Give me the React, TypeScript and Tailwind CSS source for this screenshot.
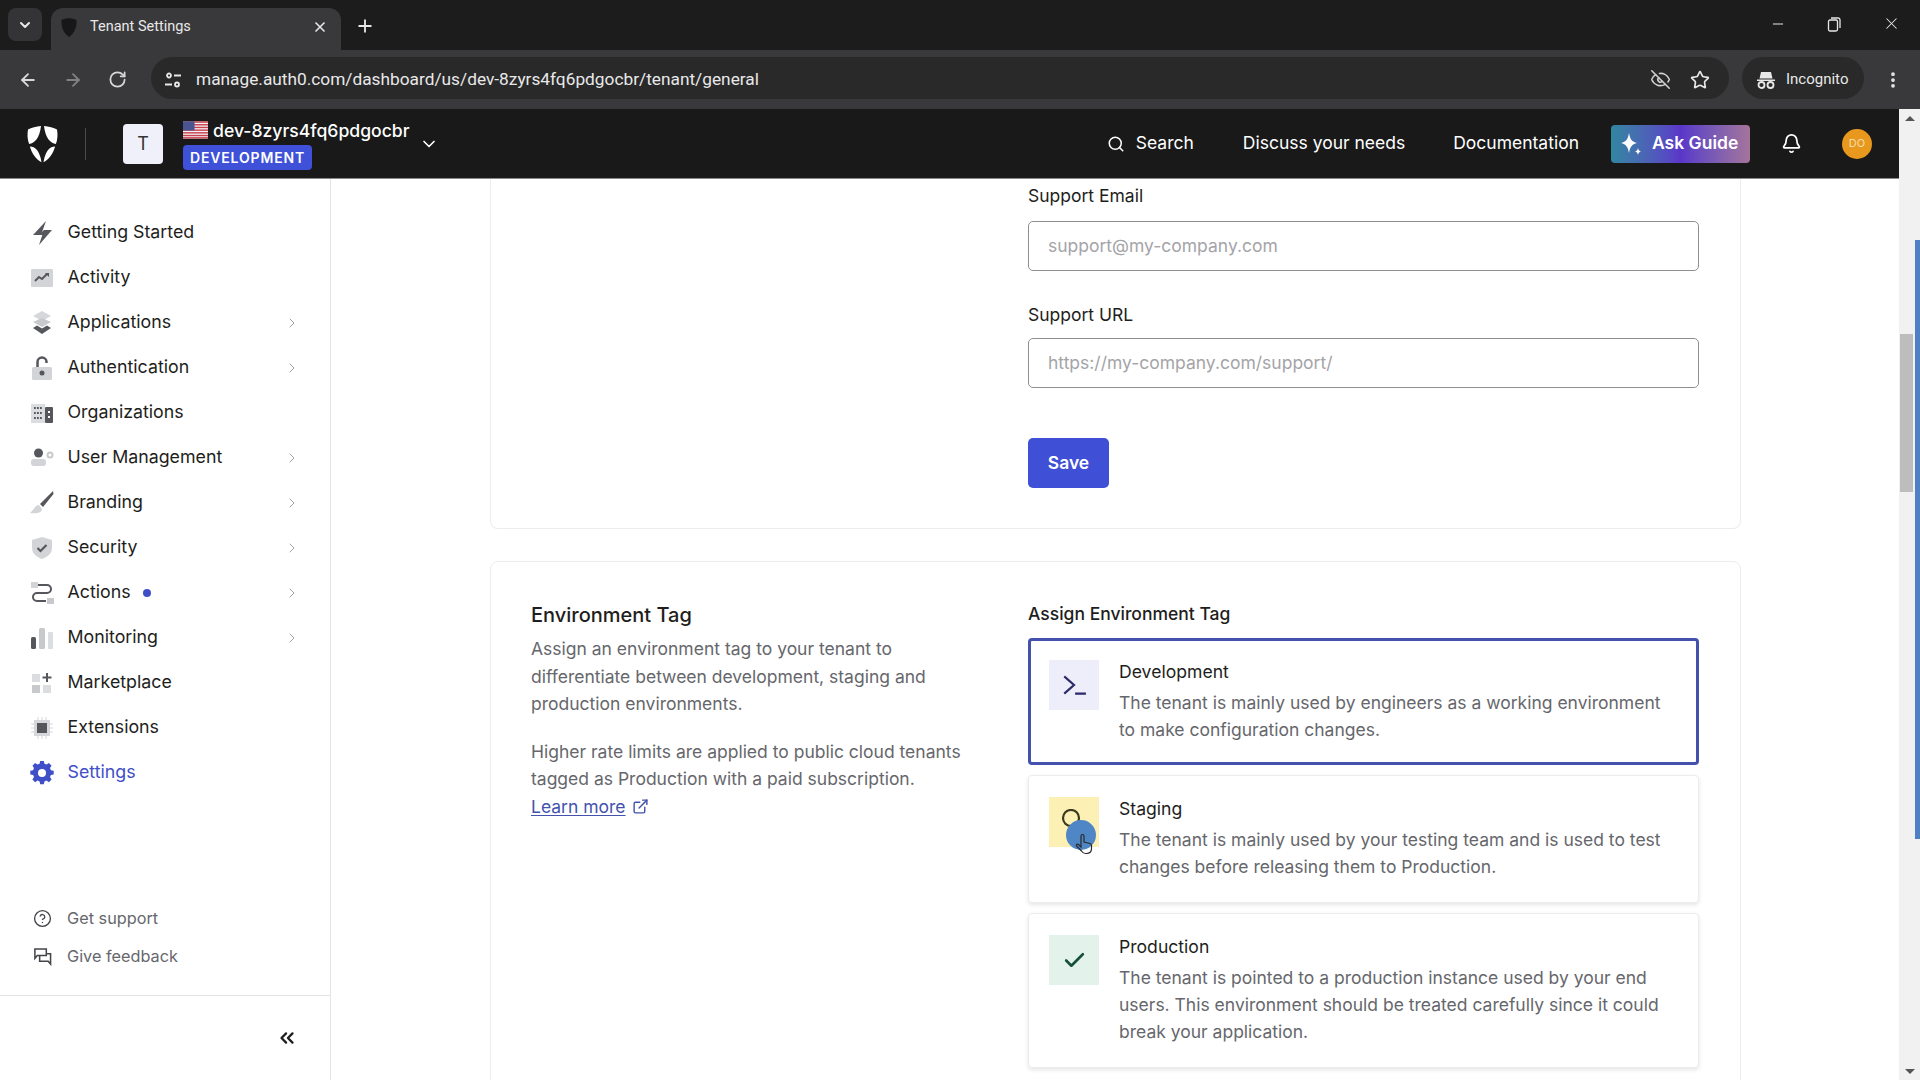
import React from 'react';
import {
  ArrowLeft,
  ArrowRight,
  Bell,
  Check,
  ChevronDown,
  ChevronRight,
  ChevronsLeft,
  CircleHelp,
  EllipsisVertical,
  ExternalLink,
  EyeOff,
  Minus,
  Plus,
  RotateCw,
  Search,
  Star,
  X,
} from 'lucide-react';

const DARK = '#56575c';
const LIGHT = '#c8c9cd';

// Logo: four petals around a star
const Logo = () => (
  <svg viewBox="0 0 32 38" className="h-[38px] w-[31px]" fill="#fff">
    <path d="M14.500 0.500C9.500 1 4.500 2.200 1 4c-.9 5.500-.5 10.500 1.200 15C8 18.500 13 12.500 14.500.5z" />
    <path d="M17.500 0.500C22.500 1 27.500 2.200 31 4c.9 5.500.5 10.500-1.200 15C24 18.500 19 12.500 17.500.5z" />
    <path d="M3 21.500C8.500 21.500 13 26 15 37.800 9 34.500 5 28.500 3 21.500z" />
    <path d="M29 21.500C23.500 21.500 19 26 17 37.800 23 34.500 27 28.500 29 21.500z" />
  </svg>
);

const Flag = () => (
  <svg viewBox="0 0 26 18" className="h-[18px] w-[25px]">
    <rect width="26" height="18" fill="#f3f3f5" />
    {[0, 2.8, 5.6, 8.4, 11.2, 14, 16.400].map((y) => (
      <rect key={y} y={y} width="26" height="1.500" fill="#c8414f" />
    ))}
    <rect width="12" height="9.500" fill="#4a5490" />
  </svg>
);

const navIcons: Record<string, React.ReactNode> = {
  bolt: (
    <>
      <path d="M16 0 3 14h8z" fill={DARK} />
      <path d="M9 24 22 9h-8z" fill={DARK} />
      <path d="M9 14h6l-1-5z" fill={DARK} />
    </>
  ),
  activity: (
    <>
      <rect x="1" y="3" width="22" height="18" rx="1" fill="#d3d4d7" />
      <path d="m5 15 4-4 3 2 5-5" fill="none" stroke={DARK} strokeWidth="2" />
      <path d="M15 7h4v4z" fill={DARK} />
    </>
  ),
  layers: (
    <>
      <path d="M12 0 21 5l-9 5-9-5z" fill="#d6d7da" />
      <path d="M3 11l9-4 9 4-9 5z" fill={LIGHT} />
      <path d="M3 17l4-2.500 5 3 5-3 4 2.500-9 6z" fill={DARK} />
    </>
  ),
  lock: (
    <>
      <path d="M7.500 11V6a4.500 4.500 0 0 1 9 0v1" fill="none" stroke={DARK} strokeWidth="2.500" />
      <rect x="2" y="11" width="20" height="13" rx="1.500" fill="#d3d4d7" />
      <circle cx="12" cy="17" r="2.500" fill={DARK} />
    </>
  ),
  org: (
    <>
      <rect x="1" y="3" width="14" height="19" fill="#dcdde0" />
      <rect x="15" y="6" width="8" height="16" rx="1" fill={DARK} />
      {[6, 11, 16].map((y) =>
        [4, 7, 10].map((x) => <rect key={`${x}-${y}`} x={x} y={y} width="1.800" height="2" fill={DARK} />),
      )}
      <rect x="18" y="10" width="2" height="2" fill="#fff" />
      <rect x="18" y="15" width="2" height="2" fill="#fff" />
    </>
  ),
  user: (
    <>
      <circle cx="8.500" cy="7" r="4.500" fill={DARK} />
      <rect x="1" y="13" width="15" height="7" rx="3" fill="#d3d4d7" />
      <circle cx="20" cy="9" r="2.500" fill="none" stroke={LIGHT} strokeWidth="2" />
    </>
  ),
  brush: (
    <>
      <path d="M23 0 10 13l3 3L23.500 3z" fill={DARK} />
      <path d="M9 14c-4 0-5 5-9 8 6 1 12 0 12-4z" fill="#d3d4d7" />
    </>
  ),
  shield: (
    <>
      <path d="M12 1 22 4v8c0 6-5 9-10 11C7 21 2 18 2 12V4z" fill="#d3d4d7" />
      <path d="m7.500 12 3 3 6-6" fill="none" stroke={DARK} strokeWidth="2.200" />
    </>
  ),
  actions: (
    <>
      <rect x="1" y="1" width="7" height="6" fill="#d3d4d7" />
      <rect x="17" y="17" width="7" height="6" fill={LIGHT} />
      <path d="M8 4h9a4 4 0 0 1 0 8H7a4 4 0 0 0 0 8h9" fill="none" stroke={DARK} strokeWidth="2" />
    </>
  ),
  bars: (
    <>
      <rect x="1" y="11" width="5" height="12" rx="1.500" fill={DARK} />
      <rect x="9" y="2" width="6" height="21" rx="1.500" fill={LIGHT} />
      <rect x="18" y="6" width="5" height="17" rx="1" fill="#dcdde0" />
    </>
  ),
  market: (
    <>
      <rect x="2" y="3" width="8" height="8" fill="#dcdde0" />
      <rect x="2" y="14" width="8" height="8" fill={LIGHT} />
      <rect x="13" y="14" width="8" height="8" fill="#dcdde0" />
      <path d="M17 2v9M12.500 6.500h9" stroke={DARK} strokeWidth="2" />
    </>
  ),
  chip: (
    <>
      <rect x="4" y="4" width="16" height="16" fill="#d6d7da" />
      <path d="M8 1v22M12 1v22M16 1v22M1 8h22M1 12h22M1 16h22" stroke="#d6d7da" strokeWidth="1" />
      <rect x="7" y="7" width="10" height="10" fill={DARK} />
    </>
  ),
  gear: (
    <>
      <path
        d="M10 1h4l.7 3.100 2.300 1 2.700-1.700 2.900 2.900L20.900 9l1 2.300 3.100.7v4l-3.100.7-1 2.300 1.700 2.700-2.900 2.900-2.700-1.700-2.300 1-.7 3.100h-4l-.7-3.100-2.300-1-2.700 1.700-2.900-2.900L3.100 19l-1-2.300-3.100-.7v-4l3.100-.7 1-2.300L1.400 6.300l2.900-2.900L7 5.100l2.300-1z"
        transform="translate(1.200 -1) scale(.9)"
        fill="#3f4fc8"
      />
      <circle cx="12" cy="12" r="4" fill="#fff" />
    </>
  ),
};

const navItems = [
  { label: 'Getting Started', icon: 'bolt' },
  { label: 'Activity', icon: 'activity' },
  { label: 'Applications', icon: 'layers', more: true },
  { label: 'Authentication', icon: 'lock', more: true },
  { label: 'Organizations', icon: 'org' },
  { label: 'User Management', icon: 'user', more: true },
  { label: 'Branding', icon: 'brush', more: true },
  { label: 'Security', icon: 'shield', more: true },
  { label: 'Actions', icon: 'actions', more: true, dot: true },
  { label: 'Monitoring', icon: 'bars', more: true },
  { label: 'Marketplace', icon: 'market' },
  { label: 'Extensions', icon: 'chip' },
  { label: 'Settings', icon: 'gear', active: true },
];

const BrowserChrome = () => (
  <div className="h-[109px] shrink-0 bg-[#1c1c1d] font-['Roboto',sans-serif] text-[#e8e8e8]">
    {/* Tab strip */}
    <div className="flex h-[50px] items-end">
      <div className="mb-[9px] ml-[8px] flex h-[33px] w-[34px] items-center justify-center rounded-lg bg-[#343436]">
        <ChevronDown size={16} strokeWidth={3} />
      </div>
      <div className="ml-[9px] flex h-[42px] w-[290px] items-center rounded-t-xl bg-[#39393b] pb-[4px] pl-[10px] pr-[13px]">
        <svg viewBox="0 0 32 38" className="h-[19px] w-[16px]" fill="#17171a">
          <path d="M16 0C10 1 5 2 1 4c-1 12 3 26 15 34C28 30 32 16 31 4 27 2 22 1 16 0z" />
        </svg>
        <span className="ml-[13px] flex-1 text-[14.500px]">Tenant Settings</span>
        <X size={16} strokeWidth={2.500} />
      </div>
      <Plus size={20} strokeWidth={2.200} className="mb-[14px] ml-[14px]" />
      <div className="mb-[17px] ml-auto flex items-center gap-[40px] pr-[19px]">
        <Minus size={16} strokeWidth={1.500} />
        <svg viewBox="0 0 16 16" className="h-[16px] w-[16px]" fill="none" stroke="#e8e8e8" strokeWidth="1.300">
          <rect x="2.500" y="4" width="9" height="11" rx="1.500" />
          <path d="M5 2h6.500A2 2 0 0 1 14 4v8" />
        </svg>
        <X size={19} strokeWidth={1.300} />
      </div>
    </div>
    {/* Toolbar */}
    <div className="flex h-[59px] items-center bg-[#39393b]">
      <ArrowLeft size={20} strokeWidth={2.200} className="ml-[18px] text-[#d8d8d8]" />
      <ArrowRight size={20} strokeWidth={2.200} className="ml-[25px] text-[#808082]" />
      <RotateCw size={19} strokeWidth={2.200} className="ml-[25px] text-[#d8d8d8]" />
      <div className="mb-[3px] ml-[24px] flex h-[42px] w-[1578px] items-center rounded-full bg-[#29292a] pl-[10px] pr-[19px] pt-[3px]">
        <span className="flex h-[24px] w-[24px] items-center justify-center">
          <svg viewBox="0 0 18 18" className="h-[18px] w-[18px]" fill="none" stroke="#e8e8e8" strokeWidth="1.800">
            <circle cx="5" cy="4.500" r="2" />
            <path d="M10 4.500h7M1 13.500h7" />
            <circle cx="13" cy="13.500" r="2" />
          </svg>
        </span>
        <span className="ml-[11px] flex-1 text-[17.300px]">manage.auth0.com/dashboard/us/dev-8zyrs4fq6pdgocbr/tenant/general</span>
        <EyeOff size={21} strokeWidth={1.800} className="text-[#d0d0d0]" />
        <Star size={20} strokeWidth={2} className="ml-[19px]" />
      </div>
      <div className="mb-[3px] ml-[13px] flex h-[42px] w-[122px] items-center rounded-full bg-[#29292a] pl-[14px] pt-[3px]">
        <svg viewBox="0 0 20 20" className="h-[20px] w-[20px]" fill="#e8e8e8">
          <path d="M5 2h10l1.500 6.500h-13zM1 9.500h18v1.500H1z" />
          <circle cx="5.500" cy="15" r="3" fill="none" stroke="#e8e8e8" strokeWidth="1.800" />
          <circle cx="14.500" cy="15" r="3" fill="none" stroke="#e8e8e8" strokeWidth="1.800" />
        </svg>
        <span className="ml-[10px] text-[15px]">Incognito</span>
      </div>
      <EllipsisVertical size={20} strokeWidth={2.500} className="ml-[19px]" />
    </div>
  </div>
);

const AppHeader = () => (
  <header className="flex h-[70px] shrink-0 items-center border-b border-[#8a8a8a] bg-[#191919] pl-[27px] text-white">
    <Logo />
    <div className="ml-[27px] h-[32px] w-px bg-[#4a4a4a]" />
    <div className="ml-[37px] flex h-[40px] w-[40px] items-center justify-center rounded-sm bg-[#f0f0fb] text-[18px] text-[#333]">
      T
    </div>
    <div className="ml-[20px] flex flex-col">
      <div className="flex items-center gap-[5px]">
        <Flag />
        <span className="text-[17.600px] font-medium leading-[25px]">dev-8zyrs4fq6pdgocbr</span>
      </div>
      <span className="mt-[2px] flex h-[25px] w-[129px] items-center justify-center rounded-[4px] bg-[#3f51d8] text-[14px] font-semibold tracking-[0.060em]">
        DEVELOPMENT
      </span>
    </div>
    <ChevronDown size={20} className="ml-[9px]" />
    <div className="ml-auto flex items-center pr-[27px] text-[17.500px]">
      <Search size={18} />
      <span className="ml-[11px]">Search</span>
      <span className="ml-[49px]">Discuss your needs</span>
      <span className="ml-[48px]">Documentation</span>
      <button className="ml-[32px] flex h-[38px] w-[139px] items-center justify-start gap-[9px] rounded-[4px] bg-linear-to-r from-[#2f86a0] via-[#5a36c8] to-[#a5749a] pl-[8px] font-semibold">
        <svg viewBox="0 0 24 24" className="h-[24px] w-[24px]" fill="#fff">
          <path d="M10 1c1 6 3 9 8 10-5 1-7 4-8 10-1-6-3-9-8-10 5-1 7-4 8-10z" />
          <path d="M19 16c.4 2 1 3 3 3.500-2 .5-2.600 1.500-3 3.500-.4-2-1-3-3-3.500 2-.5 2.600-1.500 3-3.500z" />
        </svg>
        Ask Guide
      </button>
      <Bell size={21} className="ml-[31px]" />
      <span className="ml-[40px] flex h-[30px] w-[30px] items-center justify-center rounded-full bg-[#e8981c] text-[11px] text-[#f5dca8]">
        DO
      </span>
    </div>
  </header>
);

const Sidebar = () => (
  <aside className="flex w-[331px] shrink-0 flex-col border-r border-[#e4e4e6] bg-white">
    <nav className="flex flex-col pl-[30px] pr-[32px] pt-[31px]">
      {navItems.map((item) => (
        <div key={item.label} className="flex h-[45px] items-center">
          <svg viewBox="0 0 24 24" className="h-[24px] w-[24px] shrink-0">
            {navIcons[item.icon]}
          </svg>
          <span className={`ml-[13.500px] text-[17.800px] ${item.active ? 'text-[#3f4fc8]' : 'text-[#1e1e20]'}`}>{item.label}</span>
          {item.dot && <span className="ml-[12px] h-[8px] w-[8px] rounded-full bg-[#3f4fc8]" />}
          {item.more && <ChevronRight size={16} strokeWidth={1.500} className="ml-auto mr-[-2px] text-[#a2a3a8]" />}
        </div>
      ))}
    </nav>
    <div className="mt-auto flex flex-col pb-[20px] pl-[33px] text-[16.300px] text-[#66676c]">
      <div className="flex h-[38px] items-center">
        <CircleHelp size={19} strokeWidth={1.700} className="text-[#44454a]" />
        <span className="ml-[15px]">Get support</span>
      </div>
      <div className="flex h-[38px] items-center">
        <svg viewBox="0 0 20 20" className="h-[19px] w-[19px]" fill="none" stroke="#44454a" strokeWidth="1.600">
          <path d="M14 9V2H2v10l2.500-3H14z" />
          <path d="M7 9v6h9l2.500 3V7H14" />
        </svg>
        <span className="ml-[15px]">Give feedback</span>
      </div>
    </div>
    <div className="flex h-[85px] shrink-0 items-center justify-end border-t border-[#e4e4e6] pr-[32px]">
      <ChevronsLeft size={22} strokeWidth={2.500} className="text-[#1e1e20]" />
    </div>
  </aside>
);

const Field = ({ label, placeholder, gap }: { label: string; placeholder: string; gap: string }) => (
  <div>
    <div className="text-[17.500px] leading-[27px] text-[#1e1e20]">{label}</div>
    <div className={`${gap} flex h-[50px] items-center rounded-[5px] border border-[#8f8f92] bg-white pl-[19px] text-[17.500px] text-[#a4a4a8]`}>
      {placeholder}
    </div>
  </div>
);

const envTags = [
  {
    title: 'Development',
    desc: 'The tenant is mainly used by engineers as a working environment to make configuration changes.',
    box: 'bg-[#eeeefb]',
    selected: true,
  },
  {
    title: 'Staging',
    desc: 'The tenant is mainly used by your testing team and is used to test changes before releasing them to Production.',
    box: 'bg-[#fdf0b4]',
  },
  {
    title: 'Production',
    desc: 'The tenant is pointed to a production instance used by your end users. This environment should be treated carefully since it could break your application.',
    box: 'bg-[#e3f3ec]',
  },
];

const EnvIcon = ({ title }: { title: string }) => {
  if (title === 'Development') {
    return (
      <svg viewBox="0 0 24 24" className="h-[26px] w-[26px]" fill="none" stroke="#2a2a6a" strokeWidth="2">
        <path d="m3 4 9 8-9 8M13 20h10" />
      </svg>
    );
  }
  if (title === 'Staging') {
    return (
      <svg viewBox="0 0 26 26" className="h-[26px] w-[26px]" fill="none" stroke="#3a3a1c" strokeWidth="2.200">
        <circle cx="10" cy="9" r="8" />
        <path d="m16 15 8 8" />
      </svg>
    );
  }
  return <Check size={25} strokeWidth={2.500} className="text-[#14503a]" />;
};

const TagCard = ({ tag }: { tag: (typeof envTags)[number] }) => (
  <div
    className={`relative flex rounded-[4px] bg-white pr-[20px] ${
      tag.selected
        ? 'border-[3px] border-[#4452ae] pb-[19px] pl-[18px] pt-[17px]'
        : 'border border-[#ececef] pb-[22px] pl-[20px] pt-[19px] shadow-[0_2px_4px_rgba(0,0,0,0.10)]'
    }`}
  >
    <div className={`mt-[2px] flex h-[50px] w-[50px] shrink-0 items-center justify-center ${tag.box}`}>
      <EnvIcon title={tag.title} />
    </div>
    <div className="ml-[20px]">
      <div className="text-[17.600px] leading-[27px] text-[#1e1e20]">{tag.title}</div>
      <p className="mt-[4px] text-[17.500px] leading-[27px] text-[#66676c]">{tag.desc}</p>
    </div>
    {tag.title === 'Staging' && (
      <div className="absolute left-[37px] top-[44px] h-[30px] w-[30px]">
        <div className="h-[30px] w-[30px] rounded-full bg-[#4f86c6]" />
        <svg viewBox="0 0 20 24" className="absolute left-[8px] top-[10px] h-[26px] w-[20px]" fill="none" stroke="#2a2a2a" strokeWidth="1.200">
          <path d="M7 16V5a1.500 1.500 0 0 1 3 0v6l6 1.500c1 .3 1.500 1 1.500 2v3c0 3-2 5-5 5h-1c-2 0-3-1-4-2.500L2.500 15c-.7-1.500 1-2.500 2-1.500z" />
        </svg>
      </div>
    )}
  </div>
);

const Content = () => (
  <main className="min-w-0 flex-1 overflow-hidden bg-white pl-[159px] font-['Inter',sans-serif]">
    <div className="w-[1251px] rounded-b-lg border-x border-b border-[#ececef] pb-[40px] pl-[537px] pr-[41px] pt-[3px]">
      <Field label="Support Email" placeholder="support@my-company.com" gap="mt-[12px]" />
      <div className="mt-[30px]">
        <Field label="Support URL" placeholder="https://my-company.com/support/" gap="mt-[10px]" />
      </div>
      <button className="mt-[50px] flex h-[50px] w-[81px] items-center justify-center rounded-[5px] bg-[#3f4fd6] text-[17.500px] font-semibold text-white">
        Save
      </button>
    </div>
    <div className="mt-[32px] flex h-[700px] w-[1251px] rounded-t-lg border border-[#ececef] pl-[40px] pr-[41px] pt-[38px]">
      <div className="w-[497px] shrink-0">
        <h2 className="text-[20px] font-medium leading-[30px] text-[#1e1e20]">Environment Tag</h2>
        <p className="mt-[5px] w-[450px] text-[17.500px] leading-[27.500px] text-[#66676c]">
          Assign an environment tag to your tenant to differentiate between development, staging and production environments.
        </p>
        <p className="mt-[20px] w-[450px] text-[17.500px] leading-[27.500px] text-[#66676c]">
          Higher rate limits are applied to public cloud tenants tagged as Production with a paid subscription.{' '}
          <span className="whitespace-nowrap text-[#4452ae]">
            <span className="underline underline-offset-2">Learn more</span>
            <ExternalLink size={17} className="ml-[6px] inline align-[-2px]" />
          </span>
        </p>
      </div>
      <div className="min-w-0 flex-1">
        <div className="text-[17.500px] font-medium leading-[27px] text-[#1e1e20]">Assign Environment Tag</div>
        <div className="mt-[11px] flex flex-col gap-[10px]">
          {envTags.map((tag) => (
            <TagCard key={tag.title} tag={tag} />
          ))}
        </div>
      </div>
    </div>
  </main>
);

const Scrollbar = () => (
  <div className="relative flex w-[21px] shrink-0 flex-col items-center bg-[#f1f1f1]">
    <div className="mt-[7px] h-0 w-0 border-x-[5px] border-b-[5px] border-x-transparent border-b-[#555]" />
    <div className="mr-[6px] mt-[213px] h-[158px] w-[13px] bg-[#bdbdbd]" />
    <div className="mt-auto mb-[6px] h-0 w-0 border-x-[5px] border-t-[5px] border-x-transparent border-t-[#555]" />
    <div className="absolute right-0 top-[131px] h-[599px] w-[5px] bg-[#4f80c4]" />
  </div>
);

export default function App() {
  return (
    <div className="flex h-screen w-[1920px] flex-col overflow-hidden font-['Inter',sans-serif]">
      <BrowserChrome />
      <div className="flex min-h-0 flex-1">
        <div className="flex min-w-0 flex-1 flex-col">
          <AppHeader />
          <div className="flex min-h-0 flex-1">
            <Sidebar />
            <Content />
          </div>
        </div>
        <Scrollbar />
      </div>
    </div>
  );
}
